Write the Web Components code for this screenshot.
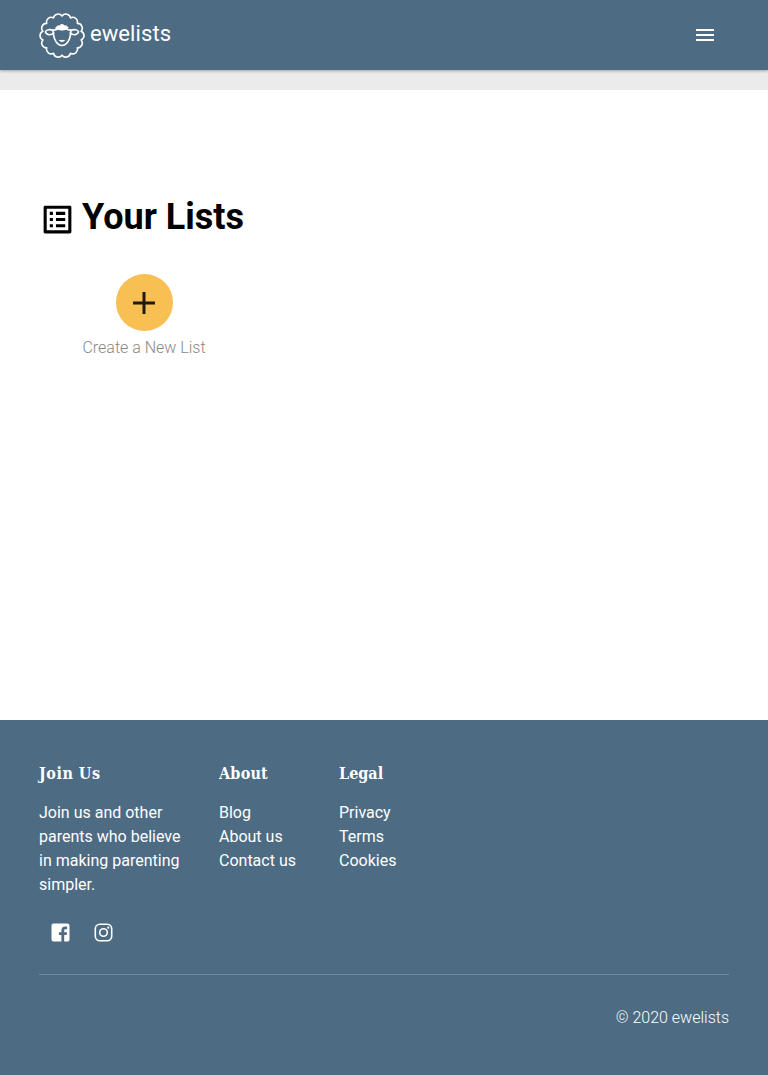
<!DOCTYPE html>
<html lang="en">
<head>
<meta charset="utf-8">
<title>ewelists</title>
<style>
html{height:100%}
body{margin:0;min-height:100%;background:#fff;font-family:Roboto,"Open Sans",sans-serif;font-size:16px;line-height:24px;color:#000}
</style>
</head>
<body>
<ewe-app></ewe-app>
<script>
const define = (name, html) => {
  const t = document.createElement('template');
  t.innerHTML = html;
  customElements.define(name, class extends HTMLElement {
    constructor() {
      super();
      this.attachShadow({mode: 'open'}).append(t.content.cloneNode(true));
    }
  });
};

// Fleece outline: equal bumps around a circle.
const fleece = (cx, cy, r, n, bump) => {
  const p = i => {
    const a = i / n * Math.PI * 2 - Math.PI / 2;
    return (cx + r * Math.cos(a)).toFixed(2) + ' ' + (cy + r * Math.sin(a)).toFixed(2);
  };
  let d = 'M' + p(0);
  for (let i = 1; i <= n; i++) d += `A${bump} ${bump} 0 0 1 ${p(i)}`;
  return d + 'Z';
};

define('ewe-logo', `
<style>
:host{display:flex;align-items:center;color:#fff}
svg{display:block;flex:none;width:46px;height:46px;margin-top:1px}
span{font-size:22px;line-height:28px;letter-spacing:.08px;margin:-2px 0 0 5px}
</style>
<svg viewBox="0 0 46 46" fill="none" stroke="#fff" stroke-width="1.6" stroke-linecap="round" stroke-linejoin="round">
<path d="${fleece(23, 22.6, 19.6, 14, 4.75)}"/>
<g transform="translate(0 -1.8)">
<path d="M14.2 19.2C10.9 17.7 7.2 18.4 6.4 20.6c.8 3.3 5.1 3.9 8.5 1.3M31.8 19.2c3.3-1.5 7-.8 7.8 1.4-.8 3.3-5.1 3.9-8.5 1.3"/>
<path d="M14 19.1c.3 6 1.7 10.6 4.6 13.4 2.5 2.4 6.3 2.4 8.8 0 2.9-2.8 4.3-7.4 4.6-13.4"/>
<path d="M14.3 18.9c2.1.1 3.7-.5 4.5-1.6 2.6 1.2 5.8 1.2 8.4 0 .8 1.1 2.4 1.7 4.5 1.6"/>
<path d="M16.8 17c.4-1.9 2.2-2.8 3.7-2.3.9-1.9 4.1-1.9 5 0 1.5-.5 3.3.4 3.7 2.3-3.1 2.5-9.3 2.5-12.4 0Z" fill="#fff" stroke-width=".8"/>
<path d="M20.7 29.5c1.3 1.1 3.3 1.1 4.6 0Z" stroke-width="1"/>
</g>
</svg>
<span>ewelists</span>`);

define('ewe-header', `
<style>
:host{display:flex;align-items:center;justify-content:space-between;height:70px;box-sizing:border-box;padding:0 51px 0 39px;background:#4d6b82;box-shadow:0 1px 3px rgba(0,0,0,.3);position:relative}
svg{display:block;width:24px;height:24px;fill:#fff}
</style>
<ewe-logo></ewe-logo>
<svg viewBox="0 0 24 24" role="img" aria-label="Menu"><path d="M3 18h18v-2H3v2zm0-5h18v-2H3v2zm0-7v2h18V6H3z"/></svg>`);

define('ewe-lists', `
<style>
:host{display:block;box-sizing:border-box;height:650px;border-top:20px solid #ebebeb;padding:102px 39px 0}
.title{display:flex;align-items:center;height:50px}
.title svg{width:37px;height:37px;margin-top:5px;flex:none}
h1{margin:0 0 0 6px;font-size:36px;line-height:50px;font-weight:700}
.create{display:flex;flex-direction:column;align-items:center;width:210px;margin-top:32px}
.circle{display:flex;align-items:center;justify-content:center;width:57px;height:57px;border-radius:50%;background:#f8c053}
.circle svg{width:22px;height:22px}
p{margin:5px 0 0;font-weight:300;color:#888}
</style>
<div class="title">
<svg viewBox="0 0 24 24"><path d="M19 5v14H5V5h14m1.1-2H3.9c-.5 0-.9.4-.9.9v16.2c0 .4.4.9.9.9h16.2c.4 0 .9-.5.9-.9V3.9c0-.5-.5-.9-.9-.9zM11 7h6v2h-6V7zm0 4h6v2h-6v-2zm0 4h6v2h-6zM7 7h2v2H7zm0 4h2v2H7zm0 4h2v2H7z"/></svg>
<h1>Your Lists</h1>
</div>
<div class="create">
<div class="circle"><svg viewBox="0 0 22 22"><path d="M11 0v22M0 11h22" stroke="#1f1a12" stroke-width="3"/></svg></div>
<p>Create a New List</p>
</div>`);

define('footer-column', `
<style>
:host{display:block;box-sizing:border-box;color:#fff}
h2{margin:0 0 15px;padding-top:1px;font-family:"Roboto Slab","DejaVu Serif Condensed","DejaVu Serif",serif;font-stretch:condensed;font-size:16px;line-height:24px;font-weight:700;white-space:nowrap;letter-spacing:var(--heading-spacing,0)}
::slotted(*){display:block}
</style>
<h2><slot name="heading"></slot></h2>
<div class="body"><slot></slot></div>`);

define('ewe-footer', `
<style>
:host{display:block;box-sizing:border-box;height:355px;padding:41px 39px 0;background:#4d6b82;color:#fff}
.columns{display:grid;grid-template-columns:180px 120px 120px;height:136px}
.join{--heading-spacing:.5px}
.about{--heading-spacing:.2px}
.social{display:flex;gap:19px;padding:23.5px 0 0 9.5px;height:30.5px}
.social svg{width:24px;height:24px;fill:#fff}
.social g{transform:translate(-.5px,-.5px)}
.copy{border-top:1px solid #708ba0;margin-top:23px;padding-top:31px;text-align:right;font-weight:300}
</style>
<div class="columns">
<footer-column class="join"><b slot="heading">Join Us</b><span>Join us and other<br>parents who believe<br>in making parenting<br>simpler.</span></footer-column>
<footer-column class="about"><b slot="heading">About</b><span>Blog</span><span>About us</span><span>Contact us</span></footer-column>
<footer-column><b slot="heading">Legal</b><span>Privacy</span><span>Terms</span><span>Cookies</span></footer-column>
</div>
<div class="social">
<svg viewBox="0 0 24 24" role="img" aria-label="Facebook"><g><path d="M5 3h14a2 2 0 0 1 2 2v14a2 2 0 0 1-2 2h-3.3v-6.4h2.4l.4-2.8h-2.8v-1.7c0-.9.4-1.3 1.4-1.3h1.5V6.2c-.5-.1-1.2-.2-1.9-.2-2.3 0-3.8 1.4-3.8 3.8v2h-2.5v2.8h2.5V21H5a2 2 0 0 1-2-2V5a2 2 0 0 1 2-2z"/></g></svg>
<svg viewBox="0 0 24 24" role="img" aria-label="Instagram"><g><rect x="3.8" y="3.8" width="16.4" height="16.4" rx="4.5" fill="none" stroke="#fff" stroke-width="1.6"/><circle cx="12" cy="12" r="3.8" fill="none" stroke="#fff" stroke-width="1.6"/><circle cx="16.8" cy="7.2" r="1.1"/></g></svg>
</div>
<div class="copy"><span>© 2020 ewelists</span></div>`);

define('ewe-app', `
<style>:host{display:block}</style>
<ewe-header></ewe-header>
<ewe-lists></ewe-lists>
<ewe-footer></ewe-footer>`);
</script>
</body>
</html>
